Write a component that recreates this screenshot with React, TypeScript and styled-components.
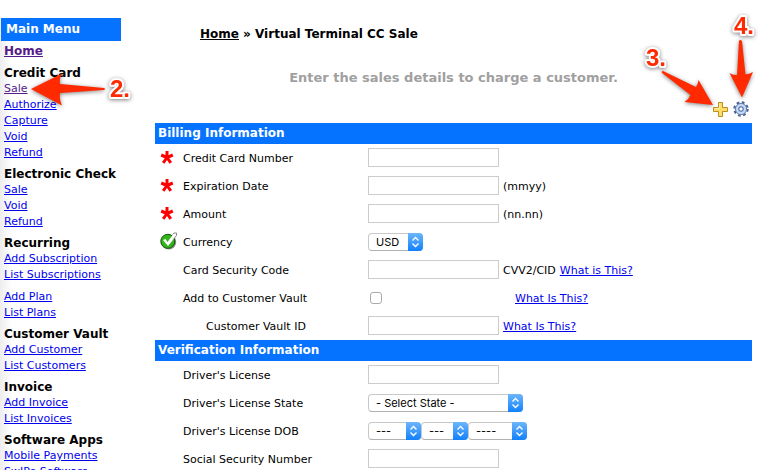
import React from "react";
import styled, { createGlobalStyle, css } from "styled-components";

const GlobalStyle = createGlobalStyle`
  * { box-sizing: border-box; }
  html, body { margin: 0; background: #fff; }
  body {
    font-family: "DejaVu Sans", Verdana, sans-serif;
    font-size: 11px;
    line-height: 16px;
    color: #000;
    overflow: hidden;
  }
`;

const Page = styled.div`
  position: relative;
  display: flex;
  align-items: flex-start;
  height: 100vh;
  overflow: hidden;
  padding: 18px 22px 0 1px;
  background: linear-gradient(to right, #ededed, #fff) no-repeat 0 18px / 12px 100%;
`;

const Sidebar = styled.nav`
  flex: none;
  width: 120px;
  margin-right: 34px;
`;

const MenuTitle = styled.h2`
  margin: 0 0 2px;
  padding-left: 5px;
  background: #0573ff;
  color: #fff;
  font-size: 12px;
  line-height: 23px;
`;

const Group = styled.section`
  padding: 0 0 5px 3px;
`;

const GroupTitle = styled.h3`
  margin: 0;
  font-size: 12px;
  line-height: 16px;
  white-space: nowrap;
`;

const LinkList = styled.ul`
  margin: 0;
  padding: 0;
  list-style: none;
  white-space: nowrap;
  & + & { margin-top: 6px; }
`;

const Anchor = styled.a<{ $visited?: boolean; $strong?: boolean }>`
  color: ${(p) => (p.$visited ? "#551a8b" : "#0000ee")};
  ${(p) =>
    p.$strong &&
    css`
      font-size: 12px;
      font-weight: bold;
    `}
`;

const Main = styled.main`
  flex: 1;
  min-width: 0;
`;

const Breadcrumb = styled.p`
  margin: 8px 0 28px 45px;
  font-size: 12px;
  font-weight: bold;
  a { color: #000; }
`;

const Intro = styled.p`
  margin: 0;
  color: #a0a0a0;
  font-size: 13px;
  font-weight: bold;
  text-align: center;
`;

const Tools = styled.div`
  display: flex;
  justify-content: flex-end;
  gap: 4px;
  margin-top: 15px;
  padding: 0 3px 6px 0;
`;

const ToolButton = styled.button`
  display: block;
  width: 16px;
  height: 16px;
  padding: 0;
  border: 0;
  background: none;
`;

const SectionTitle = styled.h2`
  margin: 0;
  padding-left: 3px;
  background: #0573ff;
  color: #fff;
  font-size: 12px;
  line-height: 21px;
`;

const Row = styled.div`
  display: grid;
  grid-template-columns: 28px 185px 1fr;
  height: 28px;
  white-space: nowrap;
`;

const Mark = styled.span`
  display: flex;
  align-items: center;
  height: 26px;
  padding-left: 5px;
`;

const Label = styled.label<{ $indent?: boolean }>`
  padding-left: ${(p) => (p.$indent ? "23px" : "0")};
  line-height: 30px;
`;

const Control = styled.div<{ $gap?: number }>`
  display: flex;
  align-items: flex-start;
  gap: ${(p) => p.$gap ?? 4}px;
  line-height: 30px;
`;

const TextBox = styled.input`
  width: 131px;
  height: 19px;
  margin: 4px 0 0;
  padding: 0 3px;
  border: 1px solid #ccc;
  background: #fff;
  font: inherit;
  line-height: 16px;
`;

const Tick = styled.input`
  appearance: none;
  width: 12px;
  height: 12px;
  margin: 8px 0 0 2px;
  border: 1px solid #aaa;
  border-radius: 3px;
  background: #fff;
  &:checked { background: #2b8cff; }
`;

const SelectFrame = styled.span<{ $width: number }>`
  position: relative;
  display: block;
  width: ${(p) => p.$width}px;
  height: 18px;
  margin-top: 5px;
`;

const SelectBox = styled.select`
  display: block;
  appearance: none;
  width: 100%;
  height: 18px;
  padding: 0 16px 0 7px;
  border: 1px solid #c8c8c8;
  border-bottom-color: #b0b0b0;
  border-radius: 4px;
  background: #fff;
  color: #000;
  font: 11px/16px Inter, sans-serif;
`;

const SelectCap = styled.span`
  position: absolute;
  inset: 0 0 0 auto;
  width: 15px;
  border-radius: 0 4px 4px 0;
  background: linear-gradient(#6db6fb, #1181fc);
  pointer-events: none;
  svg { display: block; }
`;

const Callout = styled.svg<{ $side: "left" | "right" }>`
  position: absolute;
  top: 0;
  ${(p) => p.$side}: 0;
  pointer-events: none;
  filter: drop-shadow(0 1px 2px rgba(0, 0, 0, 0.5));
  text {
    font: bold 24px "Liberation Sans", Arial, sans-serif;
    fill: #ff2a00;
    stroke: #fff;
    stroke-width: 4px;
    stroke-linejoin: round;
    paint-order: stroke;
  }
  path { fill: #ff2a00; }
`;

const Star = () => (
  <svg width="14" height="14" viewBox="0 0 14 14" aria-label="Required">
    <path
      d="M7 7.5V1M7 7.500L1.200 5M7 7.500L12.800 5M7 7.500L3.200 12.800M7 7.500L10.800 12.800"
      stroke="#f00"
      strokeWidth="3"
      fill="none"
    />
  </svg>
);

const Check = () => (
  <svg width="18" height="18" viewBox="0 0 18 18" aria-label="Complete">
    <circle cx="8.800" cy="10" r="7.400" fill="#8a8a8a" />
    <circle cx="7.800" cy="9.300" r="7" fill="#34b51c" stroke="#14540e" />
    <path d="M3 8L5.500 7l2 3L13 2.500 16.500.500 16.500 3.500 8 14z" fill="#fff" />
    <path d="M12.500 2.500L14 1h2.500v2.500l-2.500 3" fill="none" stroke="#888" />
  </svg>
);

const Plus = () => (
  <svg width="16" height="16" viewBox="0 0 16 16">
    <path d="M5.500 1.500h4v5h5v4h-5v5h-4v-5h-5v-4h5z" fill="#ffdc68" stroke="#b99020" />
    <path d="M6.500 7V2.500M1.500 7.500h5" fill="none" stroke="#fff0b0" />
  </svg>
);

const Gear = () => (
  <svg width="16" height="16" viewBox="0 0 16 16">
    <circle cx="8" cy="8" r="6.300" fill="none" stroke="#4c628c" strokeWidth="2.800" strokeDasharray="2.600 2.350" />
    <circle cx="8" cy="8" r="5.600" fill="#9fc0f3" stroke="#6c84b0" />
    <circle cx="8" cy="8" r="4" fill="none" stroke="#c9ddfb" strokeWidth="1.600" />
    <circle cx="8" cy="8" r="2.200" fill="#fff" stroke="#4c628c" />
  </svg>
);

type LinkItem = { text: string; visited?: boolean };
const l = (text: string, visited = false): LinkItem => ({ text, visited });

const menu: { title: string; lists: LinkItem[][] }[] = [
  { title: "Credit Card", lists: [[l("Sale", true), l("Authorize"), l("Capture"), l("Void"), l("Refund")]] },
  { title: "Electronic Check", lists: [[l("Sale"), l("Void"), l("Refund")]] },
  { title: "Recurring", lists: [[l("Add Subscription"), l("List Subscriptions")], [l("Add Plan"), l("List Plans")]] },
  { title: "Customer Vault", lists: [[l("Add Customer"), l("List Customers")]] },
  { title: "Invoice", lists: [[l("Add Invoice"), l("List Invoices")]] },
  { title: "Software Apps", lists: [[l("Mobile Payments"), l("SwIPe Software")]] },
];

type FieldProps = {
  id: string;
  label: string;
  mark?: "star" | "check";
  indent?: boolean;
  gap?: number;
  children?: React.ReactNode;
};

const Field = ({ id, label, mark, indent, gap, children }: FieldProps) => (
  <Row>
    <Mark>
      {mark === "star" && <Star />}
      {mark === "check" && <Check />}
    </Mark>
    <Label htmlFor={id} $indent={indent}>{label}</Label>
    <Control $gap={gap}>{children}</Control>
  </Row>
);

const DropDown = ({ id, text, width, name }: { id: string; text: string; width: number; name?: string }) => (
  <SelectFrame $width={width}>
    <SelectBox id={id} aria-label={name}>
      <option>{text}</option>
    </SelectBox>
    <SelectCap>
      <svg width="15" height="18" viewBox="0 0 15 18">
        <path d="M4.5 7.5l3-3 3 3M4.5 10.5l3 3 3-3" fill="none" stroke="#fff" strokeWidth="1.4" />
      </svg>
    </SelectCap>
  </SelectFrame>
);

export default function App() {
  return (
    <>
      <GlobalStyle />
      <Page>
        <Sidebar>
          <MenuTitle>Main Menu</MenuTitle>
          <Group>
            <Anchor href="#" $visited $strong>Home</Anchor>
          </Group>
          {menu.map((group) => (
            <Group key={group.title}>
              <GroupTitle>{group.title}</GroupTitle>
              {group.lists.map((list, i) => (
                <LinkList key={i}>
                  {list.map((item) => (
                    <li key={item.text}>
                      <Anchor href="#" $visited={item.visited}>{item.text}</Anchor>
                    </li>
                  ))}
                </LinkList>
              ))}
            </Group>
          ))}
        </Sidebar>

        <Main>
          <Breadcrumb>
            <a href="#">Home</a> » Virtual Terminal CC Sale
          </Breadcrumb>
          <Intro>Enter the sales details to charge a customer.</Intro>
          <Tools>
            <ToolButton type="button" aria-label="Add"><Plus /></ToolButton>
            <ToolButton type="button" aria-label="Settings"><Gear /></ToolButton>
          </Tools>

          <SectionTitle>Billing Information</SectionTitle>
          <Field id="card" label="Credit Card Number" mark="star"><TextBox id="card" /></Field>
          <Field id="expiry" label="Expiration Date" mark="star"><TextBox id="expiry" />(mmyy)</Field>
          <Field id="amount" label="Amount" mark="star"><TextBox id="amount" />(nn.nn)</Field>
          <Field id="currency" label="Currency" mark="check"><DropDown id="currency" text="USD" width={55} /></Field>
          <Field id="cvv" label="Card Security Code">
            <TextBox id="cvv" />
            <span>CVV2/CID</span>
            <Anchor href="#">What is This?</Anchor>
          </Field>
          <Field id="vault" label="Add to Customer Vault" gap={133}>
            <Tick id="vault" type="checkbox" />
            <Anchor href="#">What Is This?</Anchor>
          </Field>
          <Field id="vault-id" label="Customer Vault ID" indent>
            <TextBox id="vault-id" />
            <Anchor href="#">What Is This?</Anchor>
          </Field>

          <SectionTitle>Verification Information</SectionTitle>
          <Field id="license" label="Driver's License"><TextBox id="license" /></Field>
          <Field id="state" label="Driver's License State">
            <DropDown id="state" text="- Select State -" width={155} />
          </Field>
          <Field id="dob" label="Driver's License DOB" gap={0}>
            <DropDown id="dob" text="---" width={53} />
            <DropDown id="dob-day" name="Day" text="---" width={47} />
            <DropDown id="dob-year" name="Year" text="----" width={59} />
          </Field>
          <Field id="ssn" label="Social Security Number"><TextBox id="ssn" /></Field>
        </Main>

        <Callout $side="left" width="140" height="120">
          <path d="M31 89L62 73.500Q59 79 60 84L104 88Q106 89 104 90L60 93Q59 99 62 105.500z" />
          <text x="110" y="97">2.</text>
        </Callout>
        <Callout $side="right" width="134" height="120">
          <path d="M73 105L44.500 102Q49 99 50.500 95L22 73Q21 71 23 71L56 87Q58 84 58.500 80z" />
          <path d="M102 97.500L89.500 73Q93 75.500 97 75L99 41Q100 39 102 41L105.500 74.500Q109 74 113 72z" />
          <text x="6" y="66">3.</text>
          <text x="94" y="34">4.</text>
        </Callout>
      </Page>
    </>
  );
}
